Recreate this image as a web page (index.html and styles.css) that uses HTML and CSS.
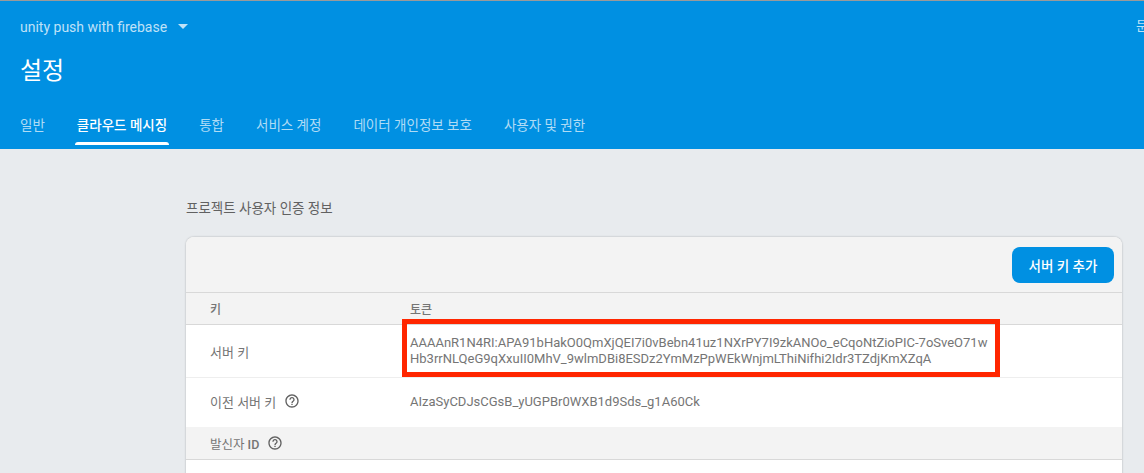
FILE: index.html
```html
<!DOCTYPE html>
<html lang="ko">
<head>
<meta charset="utf-8">
<title>설정</title>
<link rel="stylesheet" href="styles.css">
</head>
<body>
<header class="hero">
  <div class="topbar">
    <div class="project">unity push with firebase<svg class="caret" width="10" height="5" viewBox="0 0 10 5"><path d="M0 0h10L5 5z"/></svg></div>
    <div class="docs">문서</div>
  </div>
  <h1 class="title">설정</h1>
  <nav class="tabs">
    <a class="tab">일반</a>
    <a class="tab active">클라우드 메시징</a>
    <a class="tab">통합</a>
    <a class="tab">서비스 계정</a>
    <a class="tab">데이터 개인정보 보호</a>
    <a class="tab">사용자 및 권한</a>
  </nav>
</header>
<main class="content">
  <h2 class="section-title">프로젝트 사용자 인증 정보</h2>
  <section class="card">
    <div class="toolbar"><button class="primary">서버 키 추가</button></div>
    <div class="row head"><div class="col-key">키</div><div class="col-val">토큰</div></div>
    <div class="row server">
      <div class="col-key">서버 키</div>
      <div class="col-val token">AAAAnR1N4RI:APA91bHakO0QmXjQEI7i0vBebn41uz1NXrPY7I9zkANOo_eCqoNtZioPIC-7oSveO71wHb3rrNLQeG9qXxuII0MhV_9wlmDBi8ESDz2YmMzPpWEkWnjmLThiNifhi2Idr3TZdjKmXZqA</div>
      <div class="highlight"></div>
    </div>
    <div class="row legacy">
      <div class="col-key">이전 서버 키<svg class="help" viewBox="0 0 24 24"><path d="M11 18h2v-2h-2v2zm1-16C6.48 2 2 6.48 2 12s4.48 10 10 10 10-4.48 10-10S17.52 2 12 2zm0 18c-4.41 0-8-3.59-8-8s3.59-8 8-8 8 3.59 8 8-3.59 8-8 8zm0-14c-2.21 0-4 1.79-4 4h2c0-1.1.9-2 2-2s2 .9 2 2c0 2-3 1.75-3 5h2c0-2.25 3-2.5 3-5 0-2.21-1.79-4-4-4z"/></svg></div>
      <div class="col-val">AIzaSyCDJsCGsB_yUGPBr0WXB1d9Sds_g1A60Ck</div>
    </div>
    <div class="row sender"><div class="col-key"><span class="sender-label">발신자 <b>ID</b></span><svg class="help" viewBox="0 0 24 24"><path d="M11 18h2v-2h-2v2zm1-16C6.48 2 2 6.48 2 12s4.48 10 10 10 10-4.48 10-10S17.52 2 12 2zm0 18c-4.41 0-8-3.59-8-8s3.59-8 8-8 8 3.59 8 8-3.59 8-8 8zm0-14c-2.21 0-4 1.79-4 4h2c0-1.1.9-2 2-2s2 .9 2 2c0 2-3 1.75-3 5h2c0-2.25 3-2.5 3-5 0-2.21-1.79-4-4-4z"/></svg></div></div>
    <div class="row blank"></div>
  </section>
</main>
</body>
</html>
```
FILE: styles.css
```css
* { box-sizing: border-box; }
html, body { height: 100%; }
body {
  margin: 0;
  overflow: hidden;
  background: #e8ebee;
  font-family: Roboto, "Noto Sans CJK KR", sans-serif;
  color: #757575;
}
.hero {
  height: 149px;
  background: #0090e2;
  border-top: 1px solid #9a9a9a;
  color: #fff;
}
.topbar {
  display: flex;
  justify-content: space-between;
  height: 36px;
  padding-top: 15px;
  font-size: 14px;
  line-height: 20px;
  color: rgba(255, 255, 255, .75);
}
.project { margin-left: 20px; display: flex; align-items: center; }
.caret { margin-left: 11px; fill: rgba(255, 255, 255, .75); }
.docs { width: 8px; overflow: hidden; white-space: nowrap; font-size: 13px; }
.title {
  margin: 16px 0 0 20px;
  font-size: 24px;
  line-height: 36px;
  font-weight: 400;
}
.tabs {
  display: flex;
  gap: 32px;
  margin: 23px 0 0 20px;
  font-size: 13.5px;
}
.tab {
  position: relative;
  height: 33px;
  line-height: 20px;
  padding-top: 3px;
  color: rgba(255, 255, 255, .7);
  white-space: nowrap;
}
.tab.active { color: #fff; font-weight: 500; }
.tab.active::after {
  content: "";
  position: absolute;
  left: -2px;
  right: -2px;
  bottom: 0;
  height: 3px;
  background: #fff;
  border-radius: 3px 3px 0 0;
}
.content { padding: 49px 22px 0 186px; }
.section-title {
  margin: 0 0 19px;
  font-size: 13.5px;
  line-height: 20px;
  font-weight: 400;
  color: #616161;
}
.card {
  background: #fff;
  border-radius: 8px 8px 0 0;
  box-shadow: 0 0 2px rgba(0, 0, 0, .3);
  overflow: visible;
}
.toolbar {
  display: flex;
  justify-content: flex-end;
  height: 56px;
  padding: 10px 8px 0;
  background: #f3f3f3;
  border-radius: 8px 8px 0 0;
  border-bottom: 1px solid #d8d8d8;
}
.primary {
  width: 102px;
  height: 36px;
  border: 0;
  border-radius: 8px;
  background: #0090e2;
  color: #fff;
  font: 500 13.5px Roboto, "Noto Sans CJK KR", sans-serif;
}
.row {
  position: relative;
  display: flex;
  align-items: center;
  font-size: 13px;
}
.col-key {
  display: flex;
  align-items: center;
  width: 224px;
  padding-left: 24px;
  flex: none;
}
.col-val { flex: 1; }
.head {
  height: 32px;
  background: #f3f3f3;
  border-bottom: 1px solid #d8d8d8;
  font-size: 12px;
  font-weight: 500;
}
.server { height: 53px; border-bottom: 1px solid #eeeeee; }
.token {
  width: 580px;
  flex: none;
  line-height: 16px;
  word-break: break-all;
}
.highlight {
  position: absolute;
  left: 216px;
  top: -6px;
  width: 598px;
  height: 58px;
  border: 5px solid #ff2600;
}
.legacy { height: 49px; padding-bottom: 3px; }
.sender {
  height: 33px;
  background: #f3f3f3;
  border-bottom: 1px solid #d8d8d8;
  font-size: 12.5px;
}
.sender-label b { font-weight: 500; }
.help { width: 16px; height: 16px; margin-left: 8px; fill: #616161; }
.blank { height: 40px; }
```
